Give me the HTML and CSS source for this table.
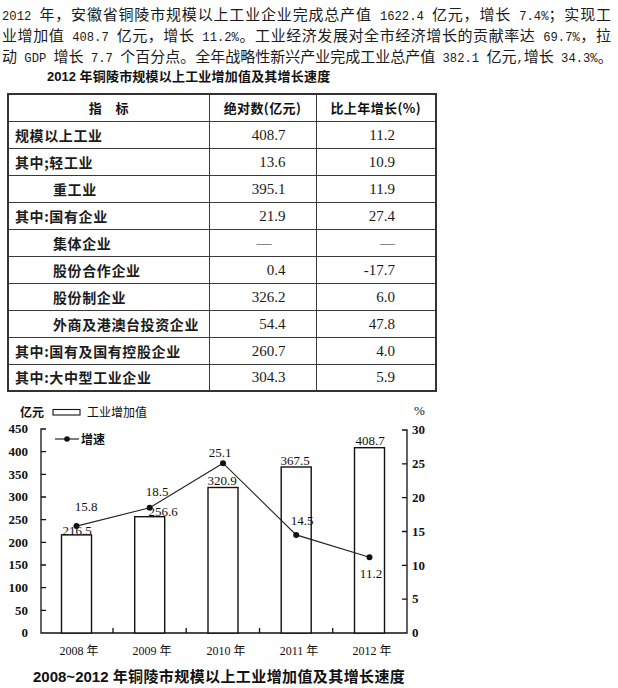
FILE: index.html
```html
<!DOCTYPE html>
<html lang="zh-CN">
<head>
<meta charset="utf-8">
<title>2012年铜陵市规模以上工业增加值</title>
<link rel="stylesheet" href="styles.css">
</head>
<body>
<div class="intro">
  <div class="ln"><span class="a">2012 </span>年，安徽省铜陵市规模以上工业企业完成总产值<span class="a"> 1622.4 </span>亿元，增长<span class="a"> 7.4%</span>；实现工</div>
  <div class="ln">业增加值<span class="a"> 408.7 </span>亿元，增长<span class="a"> 11.2%</span>。工业经济发展对全市经济增长的贡献率达<span class="a"> 69.7%</span>，拉</div>
  <div class="ln">动<span class="a"> GDP </span>增长<span class="a"> 7.7 </span>个百分点。全年战略性新兴产业完成工业总产值<span class="a"> 382.1 </span>亿元<span class="a">,</span>增长<span class="a"> 34.3%</span>。</div>
</div>
<div class="ttl"><span class="en">2012 </span>年铜陵市规模以上工业增加值及其增长速度</div>
<table class="tbl">
  <colgroup><col class="c1"><col class="c2"><col class="c3"></colgroup>
  <tr class="hd"><td>指　标</td><td>绝对数(亿元)</td><td>比上年增长(%)</td></tr>
  <tr><td class="lb">规模以上工业</td><td class="n2">408.7</td><td class="n3">11.2</td></tr>
  <tr><td class="lb">其中;轻工业</td><td class="n2">13.6</td><td class="n3">10.9</td></tr>
  <tr><td class="lb in">重工业</td><td class="n2">395.1</td><td class="n3">11.9</td></tr>
  <tr><td class="lb">其中:国有企业</td><td class="n2">21.9</td><td class="n3">27.4</td></tr>
  <tr><td class="lb in">集体企业</td><td class="n2 d2">—</td><td class="n3">—</td></tr>
  <tr><td class="lb in">股份合作企业</td><td class="n2">0.4</td><td class="n3">-17.7</td></tr>
  <tr><td class="lb in">股份制企业</td><td class="n2">326.2</td><td class="n3">6.0</td></tr>
  <tr><td class="lb in">外商及港澳台投资企业</td><td class="n2">54.4</td><td class="n3">47.8</td></tr>
  <tr><td class="lb">其中:国有及国有控股企业</td><td class="n2">260.7</td><td class="n3">4.0</td></tr>
  <tr><td class="lb">其中:大中型工业企业</td><td class="n2">304.3</td><td class="n3">5.9</td></tr>
</table>
<svg class="chart" width="618" height="270" viewBox="0 390 618 270" xmlns="http://www.w3.org/2000/svg">
  <!-- legend -->
  <text class="cnl" x="20" y="415">亿元</text>
  <rect x="53" y="407.5" width="27" height="5.5" fill="#fff" stroke="#111" stroke-width="1.1"/>
  <text class="cnr" x="87" y="415">工业增加值</text>
  <line x1="55" y1="437" x2="79" y2="437" stroke="#111" stroke-width="1.1"/>
  <circle cx="67" cy="437" r="2.8" fill="#111"/>
  <text class="cnl" x="81" y="442">增速</text>
  <text class="num" x="414" y="413">%</text>

  <!-- axes -->
  <g fill="none" stroke="#111" stroke-width="1.3">
    <path d="M46 427 H41 V631 H407 V428 H402"/>
    <path d="M41 449.7 H46 M41 472.3 H46 M41 495 H46 M41 517.7 H46 M41 540.3 H46 M41 563 H46 M41 585.7 H46 M41 608.3 H46"/>
    <path d="M402 461.8 H407 M402 495.7 H407 M402 529.5 H407 M402 563.3 H407 M402 597.2 H407"/>
    <path d="M113 631 V626 M186.2 631 V626 M259.5 631 V626 M332.7 631 V626"/>
  </g>
  <g class="num ax" text-anchor="end">
    <text x="28" y="431">450</text>
    <text x="28" y="454">400</text>
    <text x="28" y="477">350</text>
    <text x="28" y="499">300</text>
    <text x="28" y="522">250</text>
    <text x="28" y="545">200</text>
    <text x="28" y="567">150</text>
    <text x="28" y="590">100</text>
    <text x="28" y="613">50</text>
    <text x="28" y="635">0</text>
  </g>
  <g class="num ax">
    <text x="412" y="432">30</text>
    <text x="412" y="466">25</text>
    <text x="412" y="500">20</text>
    <text x="412" y="534">15</text>
    <text x="412" y="568">10</text>
    <text x="412" y="601">5</text>
    <text x="412" y="635">0</text>
  </g>

  <!-- bars -->
  <g fill="#fff" stroke="#111" stroke-width="1.4">
    <rect x="61.5" y="532.9" width="30" height="98.1"/>
    <rect x="134.7" y="514.7" width="30" height="116.3"/>
    <rect x="208" y="485.5" width="30" height="145.5"/>
    <rect x="281.2" y="465" width="30" height="166"/>
    <rect x="354.5" y="445.7" width="30" height="185.3"/>
  </g>

  <!-- line -->
  <polyline points="76.5,524.1 149.7,505.8 223,461.2 296.2,532.9 369.5,555.2" fill="none" stroke="#222" stroke-width="1.1"/>
  <g fill="#111">
    <circle cx="76.5" cy="524.1" r="3"/>
    <circle cx="149.7" cy="505.8" r="3"/>
    <circle cx="223" cy="461.2" r="3"/>
    <circle cx="296.2" cy="532.9" r="3"/>
    <circle cx="369.5" cy="555.2" r="3"/>
  </g>

  <!-- value labels -->
  <g class="num" text-anchor="middle">
    <text x="77" y="533">216.5</text>
    <text x="86" y="509">15.8</text>
    <text x="163" y="514">256.6</text>
    <text x="157" y="494">18.5</text>
    <text x="222" y="483">320.9</text>
    <text x="220" y="455">25.1</text>
    <text x="295" y="463">367.5</text>
    <text x="302" y="523">14.5</text>
    <text x="370" y="443">408.7</text>
    <text x="371" y="576">11.2</text>
  </g>

  <!-- year labels -->
  <g class="yr" text-anchor="middle">
    <text x="79" y="653">2008 年</text>
    <text x="152" y="653">2009 年</text>
    <text x="226" y="653">2010 年</text>
    <text x="299" y="653">2011 年</text>
    <text x="372" y="653">2012 年</text>
  </g>
</svg>
<div class="cap"><span class="en">2008~2012 </span>年铜陵市规模以上工业增加值及其增长速度</div>
</body>
</html>
```

FILE: styles.css
```css
html, body {
  margin: 0;
  padding: 0;
  background: #fff;
  color: #111;
}
body {
  width: 618px;
  font-family: "Noto Sans CJK SC", sans-serif;
}
.intro {
  margin-left: 2px;
  width: 609px;
  padding-top: 3px;
  font-size: 15px;
  line-height: 21px;
  color: #1a1a1a;
}
.ln {
  height: 21px;
  white-space: nowrap;
  text-align: justify;
  text-align-last: justify;
}
.a {
  font-family: "Liberation Mono", monospace;
  font-size: 12.2px;
  line-height: 10px;
}
.ttl {
  margin-left: 47px;
  height: 20px;
  line-height: 20px;
  font-size: 13px;
  font-weight: 700;
  letter-spacing: 0.2px;
  color: #111;
}
.ttl .en, .cap .en {
  font-family: "Liberation Sans", sans-serif;
  font-weight: 700;
  letter-spacing: 0;
}
.tbl {
  margin: 7px 0 0 7px;
  border-collapse: collapse;
  width: 428px;
  table-layout: fixed;
  border: 2px solid #333;
}
.c1 { width: 201px; }
.c2 { width: 107px; }
.c3 { width: 120px; }
.tbl tr { height: 27px; }
.tbl td {
  border: 1px solid #3a3a3a;
  padding: 0;
  line-height: 18px;
  white-space: nowrap;
}
.hd td {
  text-align: center;
  font-weight: 700;
  font-size: 13px;
  letter-spacing: 0.4px;
}
.lb {
  padding-left: 6px !important;
  font-size: 14px;
  font-weight: 700;
  letter-spacing: 0.6px;
  color: #1c1c1c;
}
.lb.in { padding-left: 44px !important; }
.n2, .n3 {
  text-align: right;
  font-family: "Liberation Serif", serif;
  font-size: 15px;
  color: #1a1a1a;
}
.n2 { padding-right: 30px !important; }
.n3 { padding-right: 40px !important; }
.d2 { padding-right: 44px !important; }
.chart { display: block; }
.chart text { fill: #111; }
.num {
  font-family: "Liberation Serif", serif;
  font-size: 13px;
}
.ax { font-weight: 700; }
.cnl {
  font-family: "Noto Sans CJK SC", sans-serif;
  font-size: 12px;
  font-weight: 700;
}
.cnr {
  font-family: "Noto Sans CJK SC", sans-serif;
  font-size: 12px;
}
.yr {
  font-family: "Liberation Serif", "Noto Sans CJK SC", serif;
  font-size: 12px;
}
.cap {
  margin-left: 33px;
  height: 28px;
  line-height: 28px;
  font-size: 15px;
  font-weight: 700;
  letter-spacing: 0.4px;
  color: #111;
}
```
